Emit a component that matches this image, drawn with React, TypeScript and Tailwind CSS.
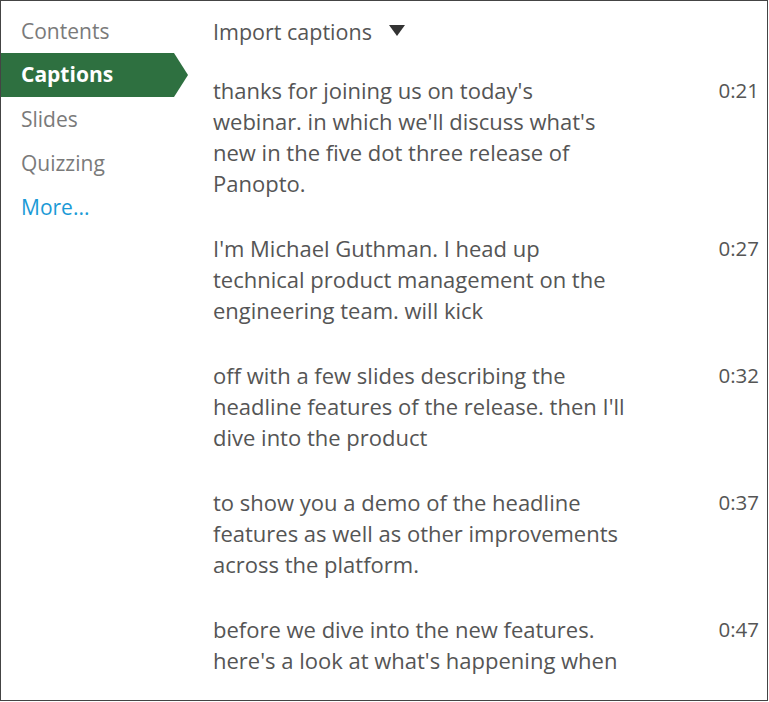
import React from "react";

const NAV = [
  { label: "Contents", active: false },
  { label: "Captions", active: true },
  { label: "Slides", active: false },
  { label: "Quizzing", active: false },
];

const CAPTIONS = [
  {
    time: "0:21",
    text: "thanks for joining us on today's webinar. in which we'll discuss what's new in the five dot three release of Panopto.",
  },
  {
    time: "0:27",
    text: "I'm Michael Guthman. I head up technical product management on the engineering team. will kick",
  },
  {
    time: "0:32",
    text: "off with a few slides describing the headline features of the release. then I'll dive into the product",
  },
  {
    time: "0:37",
    text: "to show you a demo of the headline features as well as other improvements across the platform.",
  },
  {
    time: "0:47",
    text: "before we dive into the new features. here's a look at what's happening when",
  },
];

export default function App() {
  return (
    <div
      className="h-[701px] w-[768px] overflow-hidden border border-[#444] bg-white"
      style={{ fontFamily: '"Open Sans", "Noto Sans", sans-serif' }}
    >
      <div className="flex h-full">
        <nav className="flex w-[187px] shrink-0 flex-col pt-[9px] text-[21px]">
          {NAV.map(({ label, active }) =>
            active ? (
              <div
                key={label}
                className="mb-[1px] mt-[-1px] flex h-[44px] items-center bg-[#2e7040] pl-5 font-bold text-white"
                style={{ clipPath: "polygon(0 0, 173px 0, 100% 50%, 173px 100%, 0 100%)" }}
              >
                {label}
              </div>
            ) : (
              <div key={label} className="flex h-[44px] items-center pl-5 text-[#7a7a7a]">
                {label}
              </div>
            )
          )}
          <div className="flex h-[44px] items-center pl-5 text-[#1b9ad6]">More...</div>
        </nav>
        <main className="flex-1 pl-[25px] pr-[8px] pt-[13px]">
          <div className="flex h-[36px] items-center gap-[17px] text-[21.5px] text-[#555]">
            <span>Import captions</span>
            <svg width="16" height="11" viewBox="0 0 16 11" className="mt-[-3px]">
              <polygon points="0,0 16,0 8,11" fill="#333" />
            </svg>
          </div>
          <div className="mt-[25px] flex flex-col gap-[34px]">
            {CAPTIONS.map(({ time, text }) => (
              <div key={time} className="flex justify-between gap-4">
                <p className="w-[412px] text-[22px] leading-[31px] text-[#555]">{text}</p>
                <span className="text-[20.5px] leading-[31px] text-[#555]">{time}</span>
              </div>
            ))}
          </div>
        </main>
      </div>
    </div>
  );
}
